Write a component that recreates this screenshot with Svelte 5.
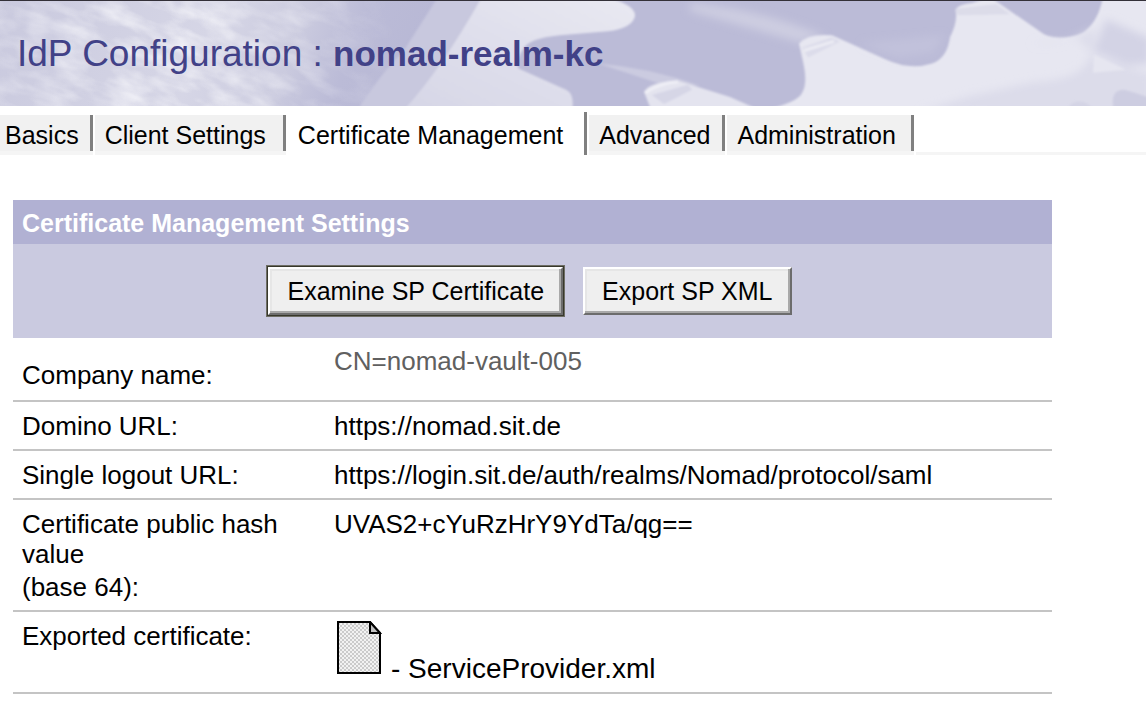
<script lang="ts">
    const realm = "nomad-realm-kc";

    const tabs = [
        "Basics",
        "Client Settings",
        "Certificate Management",
        "Advanced",
        "Administration",
    ];

    let activeTab = $state("Certificate Management");
</script>

<svelte:head>
    <title>IdP Configuration : {realm}</title>
</svelte:head>

<header class="banner">
    <svg
        class="banner-art"
        viewBox="0 0 1146 104"
        preserveAspectRatio="none"
        aria-hidden="true"
    >
        <defs>
            <linearGradient id="haze" x1="0" x2="1" y1="0" y2="0.1">
                <stop offset="0" stop-color="#c9c9de" />
                <stop offset="0.5" stop-color="#d6d6e6" />
                <stop offset="0.7" stop-color="#cbcbdf" />
                <stop offset="0.84" stop-color="#bbbbd7" />
                <stop offset="1" stop-color="#b8b8d5" />
            </linearGradient>
            <linearGradient id="blade" x1="0" x2="1" y1="1" y2="0">
                <stop offset="0" stop-color="#d6d6e6" />
                <stop offset="0.6" stop-color="#e1e1ed" />
                <stop offset="1" stop-color="#e9e9f2" />
            </linearGradient>
            <linearGradient id="fade" x1="0" x2="1" y1="0" y2="0">
                <stop offset="0" stop-color="#666" />
                <stop offset="0.45" stop-color="#ccc" />
                <stop offset="1" stop-color="#000" />
            </linearGradient>
            <mask id="left-side">
                <rect width="400" height="104" fill="url(#fade)" />
            </mask>
            <filter id="clouds" x="0" y="0" width="100%" height="100%">
                <feTurbulence
                    type="fractalNoise"
                    baseFrequency="0.03 0.07"
                    numOctaves="3"
                    seed="6"
                />
                <feColorMatrix
                    values="0 0 0 0 0.94  0 0 0 0 0.94  0 0 0 0 0.97  1.9 0 0 0 -0.65"
                />
            </filter>
            <filter id="soft" x="-10%" y="-10%" width="120%" height="120%">
                <feGaussianBlur stdDeviation="1" />
            </filter>
            <filter id="softer" x="-20%" y="-30%" width="140%" height="160%">
                <feGaussianBlur stdDeviation="4" />
            </filter>
        </defs>

        <rect width="1146" height="104" fill="#bbbbd7" />
        <rect width="440" height="104" fill="url(#haze)" />
        <g mask="url(#left-side)">
            <rect
                x="-60"
                y="-160"
                width="520"
                height="420"
                filter="url(#clouds)"
                transform="rotate(18)"
            />
        </g>

        <g filter="url(#soft)">
            <path d="M438 -4 L500 -4 L430 110 L356 110 Q386 65 402 52 Z" fill="#c8c8de" />
            <path
                d="M482 -4 H606 Q636 4 635 15 Q632 27 608 30 L560 34 Q528 37 523 48 Q514 62 519 67 L566 88 Q575 92 572 110 H402 Q440 70 482 -4 Z"
                fill="url(#blade)"
            />
            <path d="M598 62 Q650 66 700 84 L660 82 Z" fill="#cbcbe0" />
            <path
                d="M644 90 Q650 80 678 79 L730 95 L764 110 H652 Z"
                fill="#e4e4ef"
            />
            <path d="M652 93 L688 83 L692 88 L664 102 Z" fill="#d6d6e6" />
            <path d="M645 91 Q660 81 678 80" fill="none" stroke="#efeff6" stroke-width="3" />
        </g>
        <path
            d="M690 2 Q760 8 825 35 L800 41 Q750 27 690 10 Z"
            fill="#cdcde1"
            filter="url(#softer)"
        />
        <g filter="url(#soft)">
            <path
                d="M799 42 Q808 32 832 34 L886 58 Q910 69 932 62 Q947 57 950 36 Q957 22 956 12 Q953 4 972 2 L990 -4 L1044 33 Q1060 40 1082 32 Q1098 22 1103 -4 H1150 V110 H756 Q798 101 802 91 Q808 82 803 60 Z"
                fill="#e7e7f1"
            />
            <path d="M802 46 L832 36 L840 40 L808 56 Z" fill="#dcdcea" />
            <path d="M804 49 L834 40" stroke="#ececf4" stroke-width="3" />
            <path d="M955 8 L996 3 L1010 13 L958 14 Z" fill="#dcdce9" />
        </g>
        <g filter="url(#softer)">
            <path d="M1030 42 Q1070 44 1096 26 L1090 54 Q1084 78 1035 80 L970 94 L920 110 H1150 V72 L1094 56 L1080 38 Z" fill="#dcdcea" />
            <path d="M1106 18 L1150 37 V62 L1128 64 L1093 50 Z" fill="#d3d3e5" />
            <path d="M860 42 L898 56 L932 51 L945 34 Z" fill="#cacae0" opacity="0.4" />
        </g>
        <g filter="url(#soft)">
            <path d="M1094 53 L1126 68 L1093 71 Z" fill="#e6e6f0" />
            <path d="M1114 110 Q1109 88 1124 88 Q1136 91 1150 96 V110 Z" fill="#cdcde1" />
            <path d="M1066 110 Q1070 97 1084 100 Q1094 104 1092 110 Z" fill="#d4d4e5" />
        </g>
    </svg>
    <h1>IdP Configuration : <strong>{realm}</strong></h1>
</header>

<nav class="tabs" aria-label="Configuration sections">
    {#each tabs as tab}
        <button
            type="button"
            class="tab"
            class:active={activeTab === tab}
            aria-current={activeTab === tab ? "page" : undefined}
            onclick={() => (activeTab = tab)}
        >
            {tab}
        </button>
    {/each}
    <span class="tab-rest"></span>
</nav>

<main>
    <h2>Certificate Management Settings</h2>
    <div class="actions">
        <div class="default-action">
            <button type="button" class="action">Examine SP Certificate</button>
        </div>
        <button type="button" class="action">Export SP XML</button>
    </div>

    <table>
        <tbody>
            <tr class="company">
                <th scope="row">Company name:</th>
                <td>CN=nomad-vault-005</td>
            </tr>
            <tr>
                <th scope="row">Domino URL:</th>
                <td>https://nomad.sit.de</td>
            </tr>
            <tr>
                <th scope="row">Single logout URL:</th>
                <td>https://login.sit.de/auth/realms/Nomad/protocol/saml</td>
            </tr>
            <tr>
                <th scope="row">
                    Certificate public hash value
                    <span class="encoding">(base 64):</span>
                </th>
                <td>UVAS2+cYuRzHrY9YdTa/qg==</td>
            </tr>
            <tr>
                <th scope="row">Exported certificate:</th>
                <td>
                    <div class="attachment">
                        <svg width="46" height="54" viewBox="0 0 46 54" aria-hidden="true">
                            <defs>
                                <pattern id="dither" width="4" height="4" patternUnits="userSpaceOnUse">
                                    <rect width="4" height="4" fill="#f2f2f2" />
                                    <path d="M0 0h2v2h-2zM2 2h2v2h-2z" fill="#cbcbcb" />
                                </pattern>
                            </defs>
                            <path d="M2 1H34L44 12V52H2Z" fill="url(#dither)" stroke="#000" stroke-width="2" />
                            <path d="M34 1V12H44Z" fill="#c0c0c0" stroke="#000" stroke-width="2" />
                        </svg>
                        <span>- ServiceProvider.xml</span>
                    </div>
                </td>
            </tr>
        </tbody>
    </table>
</main>

<style>
    :global(body) {
        background: #fff;
        color: #000;
        font-family: "Liberation Sans", Arial, sans-serif;
        font-size: 26px;
        line-height: 30px;
    }

    button {
        font-family: inherit;
        font-size: 25px;
        line-height: 30px;
        color: #000;
        cursor: pointer;
    }

    .banner {
        display: grid;
        align-items: center;
        overflow: hidden;
        border-top: 1px solid #333038;
    }

    .banner-art,
    h1 {
        grid-area: 1 / 1;
    }

    .banner-art {
        display: block;
        width: 100%;
        height: 105px;
    }

    h1 {
        z-index: 1;
        margin: 0;
        padding: 0 17px;
        color: #414187;
        font-size: 37px;
        font-weight: 400;
        line-height: 44px;
    }

    h1 strong {
        font-size: 35px;
        font-weight: 700;
    }

    .tabs {
        display: flex;
        align-items: stretch;
        gap: 2px;
        padding-top: 6px;
    }

    .tab {
        margin: 3px 0 0;
        padding: 5px 15px 1px 10px;
        background: #f1f1f1;
        background-clip: padding-box;
        border: solid #f5f5f5;
        border-width: 0 0 4px;
        box-shadow: inset -3px 0 #808080;
        white-space: nowrap;
    }

    .tab:first-child {
        padding-left: 5px;
        padding-right: 14px;
    }

    .tab:nth-child(2) {
        padding-right: 20px;
    }

    .tab:nth-last-child(2) {
        padding-right: 18px;
    }

    .tab.active {
        margin-top: 0;
        padding: 8px 24px 5px 10px;
        background: #fff;
        border: 0;
    }

    .tab-rest {
        flex: 1;
        border-bottom: 3px solid #f5f5f5;
    }

    main {
        margin: 45px 94px 24px 13px;
    }

    h2 {
        margin: 0;
        padding: 8px 9px 6px;
        background: #b1b1d3;
        color: #fff;
        font-size: 25px;
        font-weight: 700;
        line-height: 30px;
    }

    .actions {
        display: flex;
        align-items: center;
        justify-content: center;
        gap: 19px;
        padding: 22px 6px 22px 0;
        background: #cacae0;
    }

    .default-action {
        display: flex;
        border: 1px solid #38382c;
        outline: 1px solid #6e6e64;
    }

    .action {
        padding: 7px 17px;
        background: #efefef;
        border: 2px solid;
        border-color: #fff #6c6c6c #6c6c6c #fff;
        box-shadow: inset -2px -2px #a9a9a9, inset 2px 2px #e6e6e6;
    }

    table {
        width: 100%;
        border-collapse: separate;
        border-spacing: 0;
        table-layout: fixed;
    }

    th,
    td {
        padding: 9px 0 8px;
        border-bottom: 2px solid #c4c4c4;
        font-weight: 400;
        text-align: left;
        vertical-align: top;
    }

    th {
        width: 270px;
        padding-left: 9px;
        padding-right: 42px;
    }

    .company th {
        padding-top: 22px;
        padding-bottom: 10px;
    }

    .company td {
        padding-top: 8px;
        color: #606060;
    }

    .encoding {
        display: block;
        margin-top: 3px;
    }

    .attachment {
        display: flex;
        align-items: flex-end;
        gap: 9px;
        padding-left: 2px;
        font-size: 28px;
    }

    .attachment svg {
        margin-bottom: 9px;
    }
</style>
